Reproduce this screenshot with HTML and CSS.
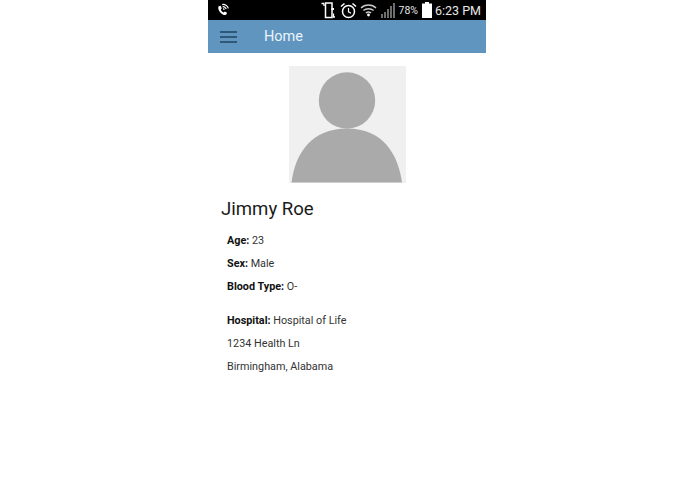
FILE: index.html
```html
<!DOCTYPE html>
<html lang="en">
<head>
<meta charset="utf-8">
<title>Home</title>
<link rel="stylesheet" href="styles.css">
</head>
<body>
<div class="phone">
  <div class="status">
    <svg class="call" width="14" height="14" viewBox="0 0 14 14">
      <path d="M2.600 3.200 L4.600 2.800 L5.800 5.200 L4.800 6.400 C5.200 7.600 6.200 8.800 7.600 9.400 L8.800 8.400 L11 9.800 L10.400 11.600 C9.600 12.400 8 12.200 6.400 11.200 C3.800 9.600 1.400 6 2.600 3.200 Z" fill="#fff"/>
      <path d="M6.200 1.600 C8.800 1 11.600 2.600 12.400 5.400 M6.600 3.800 C8.200 3.400 9.800 4.400 10.200 6 M7 5.800 C7.600 5.700 8.100 6.100 8.300 6.700" fill="none" stroke="#fff" stroke-width="1.200"/>
    </svg>
    <div class="status-right">
      <svg class="ico-rot" width="15" height="17" viewBox="0 0 15 17">
        <path d="M0.500 1.500 H3 M4.500 1 H11 V15.500 H4.500 Z" fill="none" stroke="#fff" stroke-width="1.500"/>
        <path d="M3 1.500 V4 M12.500 11.500 V15 H14" fill="none" stroke="#fff" stroke-width="1.300"/>
        <rect x="10.500" y="6" width="2.500" height="2" fill="#fff"/>
      </svg>
      <svg class="ico-alarm" width="17" height="17" viewBox="0 0 17 17">
        <circle cx="8.500" cy="9.500" r="6" fill="none" stroke="#fff" stroke-width="1.500"/>
        <path d="M8.500 6 V9.800 L11 11.200" fill="none" stroke="#fff" stroke-width="1.200"/>
        <path d="M1 4.500 L4.500 1.500 M16 4.500 L12.500 1.500" stroke="#fff" stroke-width="1.600"/>
      </svg>
      <svg class="ico-wifi" width="17" height="14" viewBox="0 0 17 14">
        <path d="M1 5 C5 1 12 1 16 5 M3.400 7.600 C6 5.200 11 5.200 13.600 7.600 M5.800 10 C7.400 8.800 9.600 8.800 11.200 10" fill="none" stroke="#c9c9c9" stroke-width="1.400"/>
        <circle cx="8.500" cy="12" r="1.400" fill="#fff"/>
      </svg>
      <svg class="ico-signal" width="16" height="15" viewBox="0 0 16 15">
        <path d="M1 11h2v4H1zM4 9h2v6H4zM7 6h2v9H7zM10 3h2v12h-2zM13 0h2v15h-2z" fill="#6e6e6e"/>
      </svg>
      <span class="pct">78%</span>
      <svg class="ico-batt" width="10" height="16" viewBox="0 0 10 16">
        <path d="M3 0h4v1.500h3V16H0V1.500h3z" fill="#fff"/>
      </svg>
      <span class="clock">6:23 PM</span>
    </div>
  </div>
  <header class="bar">
    <div class="burger"><i></i><i></i><i></i></div>
    <span class="bar-title">Home</span>
  </header>
  <main class="content">
    <div class="photo-wrap">
      <svg class="photo" width="117" height="117" viewBox="0 0 117 117">
        <rect width="117" height="117" fill="#f0f0f0"/>
        <circle cx="58" cy="34.500" r="28.200" fill="#aaa"/>
        <path d="M2.500 116.500 C6 88 22 62.500 58 62.500 C94 62.500 109 88 113 116.500 Z" fill="#aaa"/>
      </svg>
    </div>
    <h1 class="name">Jimmy Roe</h1>
    <div class="info">
      <p><b>Age:</b> 23</p>
      <p><b>Sex:</b> Male</p>
      <p><b>Blood Type:</b> O-</p>
    </div>
    <div class="info second">
      <p><b>Hospital:</b> Hospital of Life</p>
      <p>1234 Health Ln</p>
      <p>Birmingham, Alabama</p>
    </div>
  </main>
</div>
</body>
</html>
```

FILE: styles.css
```css
* { box-sizing: border-box; }
html, body { margin: 0; padding: 0; background: #fff; }
body { font-family: Roboto, "Liberation Sans", sans-serif; }
.phone { width: 278px; height: 494px; margin-left: 208px; background: #fff; overflow: hidden; }
.status { height: 20px; background: #000; display: flex; align-items: center; justify-content: space-between; padding: 0 5px 0 8px; }
.call { display: block; }
.status-right { display: flex; align-items: center; }
.status-right svg { display: block; flex: none; }
.ico-rot { margin-right: 4px; }
.ico-alarm { margin-right: 3px; }
.ico-wifi { margin-right: 3px; }
.ico-signal { margin-right: 2px; }
.pct { color: #e4e4e4; font-size: 10.5px; margin-right: 4px; }
.ico-batt { margin-right: 3px; }
.clock { color: #e8e8e8; font-size: 12.5px; }
.bar { height: 33px; background: #6095c0; display: flex; align-items: center; padding-left: 12px; }
.burger { width: 17px; display: flex; flex-direction: column; gap: 3px; margin-right: 27px; }
.burger i { display: block; height: 2px; background: #2f5877; }
.bar-title { color: #eaf3fb; font-size: 14.5px; }
.content { padding: 13px 0 0 13px; }
.photo-wrap { display: flex; justify-content: center; padding-right: 13px; }
.photo { display: block; }
.name { margin: 14px 0 0; font-size: 18.6px; line-height: 24px; font-weight: 400; color: #1a1a1a; }
.info { margin: 12px 0 0 6px; }
.info p { margin: 0 0 7px; font-size: 10.8px; line-height: 16px; color: #333; }
.info b { color: #111; font-weight: 700; }
.info.second { margin-top: 18px; }
```
